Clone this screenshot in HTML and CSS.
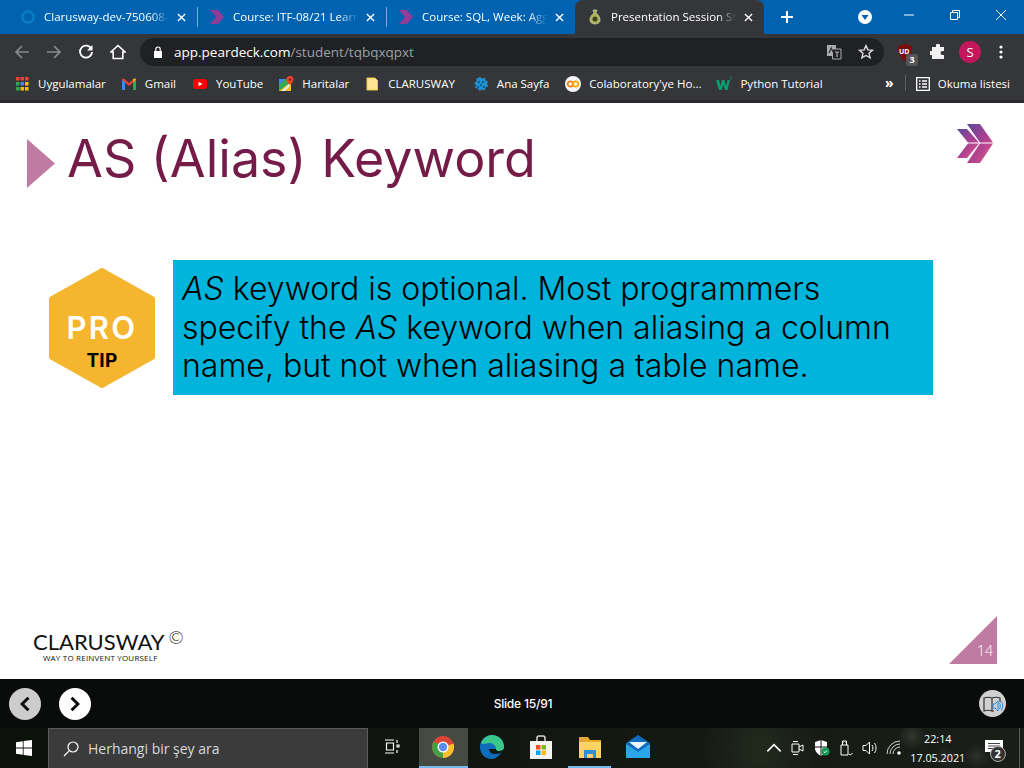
FILE: index.html
```html
<!DOCTYPE html>
<html lang="en">
<head>
    <meta charset="UTF-8">
    <title>Presentation Session Student</title>
    <link rel="stylesheet" href="styles.css">
</head>
<body>
    <header class="tabstrip">
        <div class="tab">
            <svg class="ico" viewBox="0 0 16 16"><circle cx="8" cy="8" r="5.6" fill="none" stroke="#0a7fc4" stroke-width="2.4"/></svg>
            <span class="tab-title">Clarusway-dev-750608-</span>
            <svg class="tab-x" viewBox="0 0 10 10"><path d="M1 1l8 8M9 1l-8 8" stroke="#fff" stroke-width="1.5"/></svg>
        </div>
        <div class="tab sep">
            <svg class="ico" viewBox="0 0 16 16"><path d="M1 1h6l6 7-6 7H1l6-7zM6 1h3l6 7-6 7H6l6-7z" fill="#8f3d96"/></svg>
            <span class="tab-title">Course: ITF-08/21 Learn</span>
            <svg class="tab-x" viewBox="0 0 10 10"><path d="M1 1l8 8M9 1l-8 8" stroke="#fff" stroke-width="1.5"/></svg>
        </div>
        <div class="tab sep">
            <svg class="ico" viewBox="0 0 16 16"><path d="M1 1h6l6 7-6 7H1l6-7zM6 1h3l6 7-6 7H6l6-7z" fill="#8f3d96"/></svg>
            <span class="tab-title">Course: SQL, Week: Aggr</span>
            <svg class="tab-x" viewBox="0 0 10 10"><path d="M1 1l8 8M9 1l-8 8" stroke="#fff" stroke-width="1.5"/></svg>
        </div>
        <div class="tab active">
            <svg class="ico" viewBox="0 0 16 16"><path d="M6 1h4l-1 3c3 2 4.500 5 4 8-.5 2-2.500 3-5 3s-4.500-1-5-3c-.5-3 1-6 4-8z" fill="#a9b25a" stroke="#d5d8b0" stroke-width=".6"/><circle cx="8" cy="10" r="2.500" fill="#3d4220"/></svg>
            <span class="tab-title">Presentation Session Stu</span>
            <svg class="tab-x" viewBox="0 0 10 10"><path d="M1 1l8 8M9 1l-8 8" stroke="#fff" stroke-width="1.5"/></svg>
        </div>
        <svg class="new-tab" viewBox="0 0 12 12"><path d="M6 0v12M0 6h12" stroke="#fff" stroke-width="2"/></svg>
        <svg class="profile-drop" viewBox="0 0 14 14"><circle cx="7" cy="7" r="7" fill="#fff"/><path d="M3.500 5h7L7 10z" fill="#0063b1"/></svg>
        <div class="win-btns">
            <svg viewBox="0 0 10 10"><path d="M0 5h10" stroke="#fff"/></svg>
            <svg viewBox="0 0 10 10"><path d="M.5 2.500h7v7h-7zM2.500 2.500v-2h7v7h-2" fill="none" stroke="#fff"/></svg>
            <svg viewBox="0 0 10 10"><path d="M0 0l10 10M10 0L0 10" stroke="#fff"/></svg>
        </div>
    </header>

    <div class="toolbar">
        <svg class="tool" viewBox="0 0 16 16"><path d="M15 8H2M8 2L2 8l6 6" fill="none" stroke="#87888b" stroke-width="1.700"/></svg>
        <svg class="tool" viewBox="0 0 16 16"><path d="M1 8h13M8 2l6 6-6 6" fill="none" stroke="#87888b" stroke-width="1.700"/></svg>
        <svg class="tool" viewBox="0 0 16 16"><path d="M13.500 5.200A6 6 0 1 0 14 8" fill="none" stroke="#fff" stroke-width="1.800"/><path d="M14.500 1v5.500H9z" fill="#fff"/></svg>
        <svg class="tool" viewBox="0 0 16 16"><path d="M8 1.500L1 8h2.200v6.500h9.600V8H15zM8 3.800" fill="none" stroke="#fff" stroke-width="1.600"/></svg>
        <div class="omnibox">
            <svg class="lock" viewBox="0 0 10 12"><path d="M1 5h8v7H1z" fill="#fff"/><path d="M2.800 5V3.200a2.200 2.200 0 0 1 4.400 0V5" fill="none" stroke="#fff" stroke-width="1.200"/></svg>
            <span class="url"><span class="url-host">app.peardeck.com</span>/student/tqbqxqpxt</span>
            <svg class="omni-ico" viewBox="0 0 16 16"><path d="M1 1h9v11H1z" fill="#a9aaac"/><path d="M6.500 5h8.500v10H6.500z" fill="#202124" stroke="#a9aaac"/><path d="M3 9l2.200-5L7 8M9 8h4M11 8v5" fill="none" stroke="#303134" stroke-width="1.200"/><path d="M9 8h4M11 8v5" fill="none" stroke="#a9aaac" stroke-width="1.200"/></svg>
            <svg class="omni-ico star" viewBox="0 0 16 16"><path d="M8 1.600l1.900 4.300 4.600.4-3.500 3 1.100 4.600L8 11.500l-4.100 2.400L5 9.300l-3.500-3 4.600-.4z" fill="none" stroke="#dcdcdc" stroke-width="1.400"/></svg>
        </div>
        <div class="ublock">
            <svg viewBox="0 0 16 17"><path d="M8 0l7 2c0 7-2 12-7 15C3 14 1 9 1 2z" fill="#7a0c0c"/></svg>
            <span class="ublock-ud">UD</span>
            <span class="ublock-count">3</span>
        </div>
        <svg class="puzzle" viewBox="0 0 16 16"><path d="M6 1.500a2 2 0 0 1 4 0V3h4v4h-1.500a2 2 0 0 0 0 4H14v4H2v-4H.8a2 2 0 0 1 0-4H2V3h4z" fill="#f1f1f1"/></svg>
        <span class="avatar">S</span>
        <svg class="dots" viewBox="0 0 4 14"><circle cx="2" cy="2" r="1.600" fill="#fff"/><circle cx="2" cy="7" r="1.600" fill="#fff"/><circle cx="2" cy="12" r="1.600" fill="#fff"/></svg>
    </div>

    <nav class="bookmarks">
        <a class="bm">
            <svg class="ico" viewBox="0 0 16 16"><path d="M2 1h3.500v3.500H2zM6.500 1H10v3.500H6.500zM11 1h3.500v3.500H11z" fill="#ea4335"/><path d="M2 6h3.500v3.500H2z" fill="#34a853"/><path d="M6.500 6H10v3.500H6.500z" fill="#4285f4"/><path d="M11 6h3.500v3.500H11z" fill="#fbbc04"/><path d="M2 11h3.500v3.500H2z" fill="#34a853"/><path d="M6.500 11H10v3.500H6.500zM11 11h3.500v3.500H11z" fill="#fbbc04"/></svg>
            Uygulamalar
        </a>
        <a class="bm bm-gap1">
            <svg class="ico" viewBox="0 0 16 16"><path d="M1 14V4l3 2v8z" fill="#4285f4"/><path d="M15 14V4l-3 2v8z" fill="#34a853"/><path d="M1 4c0-1.500 1.500-2 2.500-1L8 7l4.500-4c1-1 2.500-.5 2.500 1L8 10z" fill="#ea4335"/><path d="M12 6l3-2c0-1.500-1.500-2-2.500-1L12 3.500z" fill="#fbbc04"/></svg>
            Gmail
        </a>
        <a class="bm">
            <svg class="ico" viewBox="0 0 16 16"><rect x="1" y="3" width="14" height="10" rx="3" fill="#f00"/><path d="M6.500 5.800v4.400L10.500 8z" fill="#fff"/></svg>
            YouTube
        </a>
        <a class="bm">
            <svg class="ico" viewBox="0 0 16 16"><path d="M1 3h11v12H1z" fill="#34a853"/><path d="M1 15L13 6v9z" fill="#fbbc04"/><path d="M1 3h6L1 9z" fill="#4285f4"/><path d="M3 15l9-8v3l-5 5z" fill="#e8e8e8"/><path d="M12 0a3.500 3.500 0 0 1 3.500 3.500C15.500 6 12 9 12 9S8.500 6 8.500 3.500A3.500 3.500 0 0 1 12 0z" fill="#ea4335"/><circle cx="12" cy="3.500" r="1.200" fill="#8c1d18"/></svg>
            Haritalar
        </a>
        <a class="bm bm-gap3">
            <svg class="ico" viewBox="0 0 16 16"><path d="M3 2h8l2.500 2.500V14H3z" fill="#fde293" stroke="#f4c542"/></svg>
            CLARUSWAY
        </a>
        <a class="bm bm-gap1">
            <svg class="ico" viewBox="0 0 16 16"><path d="M7 1l2 1.500 3-1 .5 3 2.500 1-1 2.500 1.500 2.500-3 1-.5 3-3-1-2.500 1.500-1.500-2.500-3-.5 1-3L1 7l2.500-1.500L3.500 2.500z" fill="#1f8fd0"/><path d="M5 5h2v2H5zM9 5h2v2H9zM7 8h2v2H7zM4 10h2v2H4zM10 10h2v2h-2z" fill="#0c5c8a"/></svg>
            Ana Sayfa
        </a>
        <a class="bm">
            <svg class="ico" viewBox="0 0 16 16"><circle cx="8" cy="8" r="8" fill="#f4f4f4"/><circle cx="5.300" cy="8" r="2.600" fill="none" stroke="#e8871e" stroke-width="1.800"/><circle cx="10.700" cy="8" r="2.600" fill="none" stroke="#f9ab00" stroke-width="1.800"/></svg>
            Colaboratory'ye Ho...
        </a>
        <a class="bm">
            <svg class="ico" viewBox="0 0 16 16"><path d="M0 4h3l1.500 6L6 4h2.500L10 10l1-3.500L11.500 4h2.500l-2.500 10H9L7.200 8.500 5.500 14H3z" fill="#049f6c"/><path d="M13.500 1h2l-1 1.200c.8.200.9 1.800-.9 1.800" fill="none" stroke="#049f6c" stroke-width=".7"/></svg>
            Python Tutorial
        </a>
        <span class="bm-more">»</span>
        <a class="bm bm-reading">
            <svg class="ico" viewBox="0 0 14 14"><path d="M.7.700h12.600v12.600H.7z" fill="none" stroke="#fff" stroke-width="1.300"/><path d="M3 4h1.500M6 4h5M3 7h1.500M6 7h5M3 10h1.500M6 10h5" stroke="#fff" stroke-width="1.300"/></svg>
            Okuma listesi
        </a>
    </nav>

    <main class="slide">
        <div class="slide-head">
            <span class="title-arrow"></span>
            <h1>AS (Alias) Keyword</h1>
            <svg class="slide-logo" viewBox="0 0 36 39">
                <defs><linearGradient id="chev" x1="0" y1="0" x2="1" y2="1"><stop offset="0" stop-color="#5b4aa0"/><stop offset=".5" stop-color="#a8408f"/><stop offset="1" stop-color="#e8558d"/></linearGradient></defs>
                <path d="M0 5h10l12 13.500H11zM0 34l11-14.500h11L10 34z" fill="url(#chev)"/>
                <path d="M10 0h13l13 18.500H23zM10 39l13-19.500h13L23 39z" fill="url(#chev)"/>
            </svg>
        </div>
        <div class="tip-row">
            <svg class="tip-hex" viewBox="0 0 106 120">
                <polygon points="53,3 103,31 103,89 53,117 3,89 3,31" fill="#f5b52e" stroke="#f5b52e" stroke-width="6" stroke-linejoin="round"/>
                <text class="hex-pro" x="53" y="71" text-anchor="middle">PRO</text>
                <text class="hex-tip" x="53" y="99" text-anchor="middle">TIP</text>
            </svg>
            <p class="tip-box"><em>AS</em> keyword is optional. Most programmers specify the <em>AS</em> keyword when aliasing a column name, but not when aliasing a table name.</p>
        </div>
        <footer class="slide-foot">
            <div class="brand">
                <div class="brand-name">CLARUSWAY<span class="brand-c">©</span></div>
                <div class="brand-sub">WAY TO REINVENT YOURSELF</div>
            </div>
            <div class="page-mark"><span>14</span></div>
        </footer>
    </main>

    <div class="slide-bar">
        <span class="nav-btn prev"><svg viewBox="0 0 10 14"><path d="M8 1.500L2.500 7 8 12.500" fill="none" stroke="#0a0c0c" stroke-width="2.600"/></svg></span>
        <span class="nav-btn next"><svg viewBox="0 0 10 14"><path d="M2 1.500L7.500 7 2 12.500" fill="none" stroke="#0a0c0c" stroke-width="2.600"/></svg></span>
        <span class="slide-count">Slide 15/91</span>
        <span class="read-btn">
            <svg viewBox="0 0 20 18"><path d="M1 3q4-1.500 8 0v13q-4-1.500-8 0zM9 3q4-1.500 8 0v4" fill="none" stroke="#333" stroke-width="1.200"/><path d="M9 16h2" stroke="#333" stroke-width="1.200"/><path d="M10 9h2l3-3v10l-3-3h-2z" fill="#d0d0d0" stroke="#2b88d8"/><path d="M16.500 8c1 1.500 1 4 0 6M18.500 6.500c1.500 2.500 1.500 6.500 0 9" fill="none" stroke="#2b88d8"/></svg>
        </span>
    </div>

    <div class="taskbar">
        <svg class="win-logo" viewBox="0 0 16 16"><path d="M0 2.200l6.800-1v6.400H0zM7.600 1.100L16 0v7.600H7.600zM0 8.400h6.800v6.400l-6.800-1zM7.600 8.400H16V16l-8.400-1.100z" fill="#fff"/></svg>
        <div class="search">
            <svg viewBox="0 0 16 16"><circle cx="10" cy="6" r="5" fill="none" stroke="#fff" stroke-width="1.200"/><path d="M6.400 9.600L1 15" stroke="#fff" stroke-width="1.200"/></svg>
            <span>Herhangi bir şey ara</span>
        </div>
        <div class="task-cell task-view">
            <svg class="task-ico small" viewBox="0 0 16 16"><path d="M1 1h9M1 14h9M2.500 4h7v7h-7zM13 1v3M13 6h2v2h-2zM13 11v3" fill="none" stroke="#fff" stroke-width="1.200"/></svg>
        </div>
        <div class="task-cell running active">
            <svg class="task-ico" viewBox="0 0 24 24"><circle cx="12" cy="12" r="11" fill="#db4437"/><path d="M12 12L22.500 8.500A11 11 0 0 1 12 23z" fill="#fbc02d"/><path d="M12 12L12 23A11 11 0 0 1 2.500 6.500z" fill="#43a047"/><circle cx="12" cy="12" r="5.500" fill="#fff"/><circle cx="12" cy="12" r="4.200" fill="#5b8def"/></svg>
        </div>
        <div class="task-cell">
            <svg class="task-ico" viewBox="0 0 24 24"><path d="M12 0a12 12 0 0 1 12 12v2H9c0 3 3 5 6 5 2 0 4-.5 6-1.500-2 4-6 6.500-9.500 6.500C5 24 0 19 0 12 0 5 5 0 12 0z" fill="#0f6cbd"/><path d="M1 8c2-5 7-8 11-8a12 12 0 0 1 12 12c0 3-3 4-5 4-1.500 0-3-.5-3-2 0-3-3-6-6-6-4 0-7 2-9 0z" fill="#39c889"/></svg>
        </div>
        <div class="task-cell">
            <svg class="task-ico" viewBox="0 0 24 24"><path d="M8 7V3q0-2 2-2h4q2 0 2 2v4" fill="none" stroke="#d8d8d8" stroke-width="1.500"/><path d="M1 6h22v18H1z" fill="#f3f3f3"/><path d="M7 10h4.500v4.500H7z" fill="#f25022"/><path d="M12.500 10H17v4.500h-4.500z" fill="#7fba00"/><path d="M7 15.500h4.500V20H7z" fill="#00a4ef"/><path d="M12.500 15.500H17V20h-4.500z" fill="#ffb900"/></svg>
        </div>
        <div class="task-cell running">
            <svg class="task-ico" viewBox="0 0 24 24"><path d="M1 2h9l2 3h11v18H1z" fill="#e8a82c"/><path d="M1 7h22v16H1z" fill="#fcd462"/><path d="M6 15h12v8h-3v-4H9v4H6z" fill="#2d8fd5"/></svg>
        </div>
        <div class="task-cell">
            <svg class="task-ico" viewBox="0 0 24 24"><path d="M0 8L12 0l12 8v15H0z" fill="#0f6cbd"/><path d="M0 9l12 8 12-8v14H0z" fill="#28a8ea"/><path d="M3 7h18l-9 7z" fill="#e8f5fc"/></svg>
        </div>
        <div class="tray">
            <svg viewBox="0 0 12 12"><path d="M1 8.500l5-5 5 5" fill="none" stroke="#fff" stroke-width="1.200"/></svg>
            <svg viewBox="0 0 14 16"><path d="M1 4h7v8H1zM8 7l4-2v6l-4-2M2 1.500h5M2 14.500h5" fill="none" stroke="#fff"/></svg>
            <svg viewBox="0 0 16 16"><path d="M1 2l6-2 6 2v6c0 4-3 6-6 8-3-2-6-4-6-8z" fill="#fff"/><path d="M7 0v16M1 7h12" stroke="#111"/><circle cx="11.500" cy="11.500" r="4" fill="#0f9d58"/><path d="M9.800 11.500l1.200 1.200 2-2" fill="none" stroke="#fff"/></svg>
            <svg viewBox="0 0 16 16"><path d="M3 5h7v10H3zM4.500 5V1h4v4M5.500 2.500h.5M7 2.500h.5M11 14l1.500 1 2-2" fill="none" stroke="#fff"/></svg>
            <svg viewBox="0 0 16 16"><path d="M1 5.500h3L7.500 2v12L4 10.500H1zM10 5c1.200 1.800 1.200 4.200 0 6M12.500 3c2 3 2 7 0 10" fill="none" stroke="#fff"/></svg>
            <svg viewBox="0 0 16 16"><path d="M1 14A13 13 0 0 1 14 1M4 14A10 10 0 0 1 14 4M7 14a7 7 0 0 1 7-7" fill="none" stroke="#cfcfcf"/><circle cx="13" cy="13" r="1.800" fill="#fff"/></svg>
        </div>
        <div class="clock"><span>22:14</span><span>17.05.2021</span></div>
        <div class="notif">
            <svg viewBox="0 0 18 16"><path d="M0 0h18v12H8l-3 3v-3H0z" fill="#fff"/><path d="M3 3.500h12M3 6h12M3 8.500h8" stroke="#444"/></svg>
            <span class="notif-count">2</span>
        </div>
        <span class="show-desktop"></span>
    </div>
</body>
</html>
```

FILE: styles.css
```css
* {
    box-sizing: border-box;
}
html, body {
    margin: 0;
    padding: 0;
}
body {
    width: 1024px;
    height: 768px;
    overflow: hidden;
    display: flex;
    flex-direction: column;
    font-family: "Open Sans", "Noto Sans", sans-serif;
    font-size: 12px;
    color: #fff;
    background: #fff;
}
svg {
    display: block;
    flex: none;
}
.ico {
    width: 16px;
    height: 16px;
}

/* tab strip */
.tabstrip {
    height: 34px;
    flex: none;
    display: flex;
    align-items: center;
    padding-left: 8px;
    background: #0063b1;
}
.tab {
    width: 189px;
    height: 34px;
    flex: none;
    display: flex;
    align-items: center;
    padding: 0 11px 0 12px;
    gap: 8px;
    position: relative;
}
.sep::before {
    content: "";
    position: absolute;
    left: 0;
    top: 7px;
    height: 20px;
    width: 1px;
    background: #7ea9d2;
}
.tab.active {
    background: #35363a;
    border-radius: 8px 8px 0 0;
}
.tab-title {
    flex: 1;
    overflow: hidden;
    white-space: nowrap;
    font-size: 11.500px;
    margin-bottom: 2px;
    -webkit-mask-image: linear-gradient(to right, #000 85%, transparent);
    mask-image: linear-gradient(to right, #000 85%, transparent);
}
.tab-x {
    width: 9px;
    height: 9px;
}
.new-tab {
    width: 12px;
    height: 12px;
    margin-left: 17px;
}
.profile-drop {
    width: 14px;
    height: 14px;
    margin-left: 65px;
}
.win-btns {
    display: flex;
    gap: 36px;
    margin-left: 32px;
    margin-bottom: 5px;
}
.win-btns svg {
    width: 10px;
    height: 10px;
}

/* toolbar */
.toolbar {
    height: 34px;
    flex: none;
    display: flex;
    align-items: center;
    padding: 2px 0 0 14px;
    background: #35363a;
}
.tool {
    width: 16px;
    height: 16px;
    margin-right: 16px;
}
.omnibox {
    width: 744px;
    height: 28px;
    margin-left: -2px;
    display: flex;
    align-items: center;
    padding: 0 10px 0 13px;
    border-radius: 14px;
    background: #202124;
}
.lock {
    width: 10px;
    height: 12px;
    margin-right: 11px;
}
.url {
    flex: 1;
    font-size: 13.500px;
    color: #9aa0a6;
}
.url-host {
    color: #fff;
}
.omni-ico {
    width: 16px;
    height: 16px;
    margin-left: 16px;
}
.ublock {
    position: relative;
    width: 16px;
    height: 17px;
    margin-left: 13px;
}
.ublock svg {
    width: 16px;
    height: 17px;
}
.ublock-ud {
    position: absolute;
    left: 2px;
    top: 3px;
    font-size: 7px;
    font-weight: 700;
    line-height: 9px;
}
.ublock-count {
    position: absolute;
    left: 9px;
    top: 10px;
    width: 12px;
    height: 12px;
    border-radius: 2px;
    background: #555;
    font-size: 9px;
    font-weight: 700;
    line-height: 12px;
    text-align: center;
}
.puzzle {
    width: 16px;
    height: 16px;
    margin-left: 17px;
}
.avatar {
    width: 22px;
    height: 22px;
    margin-left: 13px;
    border-radius: 50%;
    background: #c2185b;
    font-size: 13px;
    line-height: 22px;
    text-align: center;
}
.dots {
    width: 4px;
    height: 14px;
    margin-left: 18px;
}

/* bookmarks */
.bookmarks {
    height: 35px;
    flex: none;
    display: flex;
    align-items: center;
    gap: 15px;
    padding: 0 14px 2px;
    background: #35363a;
    border-bottom: 3px solid #2a2a2d;
}
.bm {
    display: flex;
    align-items: center;
    gap: 8px;
    white-space: nowrap;
    font-size: 11.500px;
}
.bm .ico {
    margin-top: 2px;
}
.bm-gap1 {
    margin-right: 1px;
}
.bm-gap3 {
    margin-right: 3px;
}
.bm-more {
    margin-left: auto;
    font-size: 14px;
    font-weight: 700;
    line-height: 14px;
}
.bm-reading {
    margin-left: -4px;
    padding-left: 10px;
    border-left: 1px solid #5f6368;
}
.bm-reading .ico {
    width: 14px;
    height: 14px;
}

/* slide */
.slide {
    flex: 1;
    display: flex;
    flex-direction: column;
    background: #fff;
    color: #000;
    padding: 21px 27px 15px 27px;
}
.slide-head {
    display: flex;
    align-items: flex-start;
}
.title-arrow {
    width: 28px;
    height: 49px;
    margin-top: 15px;
    flex: none;
    background: #c07ba3;
    clip-path: polygon(0 0, 100% 50%, 0 100%);
}
h1 {
    margin: 1px 0 0 12px;
    font-family: Inter, Lato, sans-serif;
    font-weight: 400;
    font-size: 52px;
    line-height: 68px;
    color: #741b47;
}
.slide-logo {
    width: 36px;
    height: 39px;
    margin-left: auto;
    margin-right: 4px;
}
.tip-row {
    display: flex;
    margin-top: 67px;
    padding-left: 22px;
}
.tip-hex {
    width: 106px;
    height: 120px;
    margin-top: 8px;
}
.hex-pro {
    font-family: Inter, sans-serif;
    font-size: 31px;
    font-weight: 600;
    letter-spacing: 2.300px;
    fill: #fff;
}
.hex-tip {
    font-family: Inter, sans-serif;
    font-size: 19px;
    font-weight: 700;
    letter-spacing: .3px;
    fill: #000;
}
.tip-box {
    width: 760px;
    height: 135px;
    margin: 0 0 0 18px;
    padding: 10px 30px 0 9px;
    background: #00b4dc;
    font-family: Inter, Lato, sans-serif;
    font-weight: 300;
    font-size: 32px;
    line-height: 38.500px;
}
.slide-foot {
    margin-top: auto;
    display: flex;
    align-items: flex-end;
    justify-content: space-between;
}
.brand {
    margin-left: 6px;
    margin-bottom: 1px;
    color: #111;
}
.brand-name {
    font-family: Lato, sans-serif;
    font-size: 22px;
    line-height: 26px;
    font-weight: 400;
}
.brand-c {
    margin-left: 4px;
    font-size: 18px;
    font-weight: 300;
    vertical-align: 6px;
    line-height: 0;
}
.brand-sub {
    margin: -2px 0 0 10px;
    font-family: "Open Sans", sans-serif;
    font-size: 8px;
    letter-spacing: .2px;
    line-height: 10px;
}
.page-mark {
    width: 48px;
    height: 48px;
    display: flex;
    align-items: flex-end;
    justify-content: flex-end;
    padding: 0 4px 5px 0;
    background: #c07ba3;
    clip-path: polygon(100% 0, 100% 100%, 0 100%);
    color: #fff;
    font-size: 14px;
    font-weight: 300;
    line-height: 16px;
}

/* player bar */
.slide-bar {
    height: 49px;
    flex: none;
    display: flex;
    align-items: center;
    position: relative;
    padding: 0 18px 0 9px;
    background: #0a0c0c;
}
.nav-btn {
    width: 32px;
    height: 32px;
    margin-right: 18px;
    display: flex;
    align-items: center;
    justify-content: center;
    border-radius: 50%;
    background: #fff;
}
.nav-btn.prev {
    background: #cccccc;
}
.nav-btn svg {
    width: 12px;
    height: 16px;
}
.slide-count {
    position: absolute;
    left: 0;
    right: 0;
    margin-left: 22px;
    text-align: center;
    font-family: Inter, sans-serif;
    font-size: 12px;
    font-weight: 500;
    letter-spacing: -.2px;
}
.read-btn {
    width: 27px;
    height: 27px;
    margin-left: auto;
    display: flex;
    align-items: center;
    justify-content: center;
    border-radius: 50%;
    background: #d0d0d0;
}
.read-btn svg {
    width: 20px;
    height: 18px;
}

/* windows taskbar, wallpaper shows through */
.taskbar {
    height: 40px;
    flex: none;
    display: flex;
    align-items: center;
    background:
        radial-gradient(circle at 912px 8px, rgba(150, 155, 150, .2), transparent 14px),
        radial-gradient(circle at 977px 28px, rgba(150, 155, 150, .16), transparent 13px),
        radial-gradient(circle at 945px 30px, rgba(120, 125, 120, .14), transparent 12px),
        radial-gradient(circle at 760px 20px, rgba(70, 90, 60, .25), transparent 60px),
        linear-gradient(90deg, #0d110b, #11150f 40%, #171b14 80%, #1a1e18);
}
.win-logo {
    width: 16px;
    height: 16px;
    margin: 0 16px;
}
.search {
    width: 320px;
    height: 40px;
    display: flex;
    align-items: center;
    gap: 9px;
    padding-left: 14px;
    background: #3b3b3b;
    border: 1px solid #5c5c5c;
    border-bottom: none;
    color: #d8d8d8;
    font-size: 14px;
}
.search svg {
    width: 16px;
    height: 16px;
}
.task-cell {
    width: 48.750px;
    height: 40px;
    flex: none;
    display: flex;
    align-items: center;
    justify-content: center;
    border-bottom: 2px solid transparent;
}
.task-view {
    width: 51px;
    padding-right: 4px;
}
.task-cell.running {
    border-image: linear-gradient(90deg, transparent 8%, #76b9ed 8%, #76b9ed 92%, transparent 92%) 1;
}
.task-cell.active {
    background: #454a43;
    border-image: none;
    border-bottom-color: #76b9ed;
}
.task-ico {
    width: 24px;
    height: 24px;
}
.task-ico.small {
    width: 16px;
    height: 16px;
}
.tray {
    display: flex;
    align-items: center;
    gap: 8px;
    margin-left: 103px;
}
.tray svg {
    width: 16px;
    height: 16px;
}
.clock {
    width: 72px;
    display: flex;
    flex-direction: column;
    align-items: center;
    font-size: 10.800px;
    line-height: 19px;
}
.notif {
    position: relative;
    width: 24px;
    margin-left: 8px;
}
.notif svg {
    width: 18px;
    height: 16px;
    margin-left: 3px;
}
.notif-count {
    position: absolute;
    left: 8px;
    top: 6px;
    width: 16px;
    height: 16px;
    border-radius: 50%;
    border: 1px solid #aaa;
    background: #333;
    font-size: 11px;
    font-weight: 700;
    line-height: 14px;
    text-align: center;
}
.show-desktop {
    width: 1px;
    height: 40px;
    margin-left: auto;
    margin-right: 4px;
    background: #5a5e58;
}
```
